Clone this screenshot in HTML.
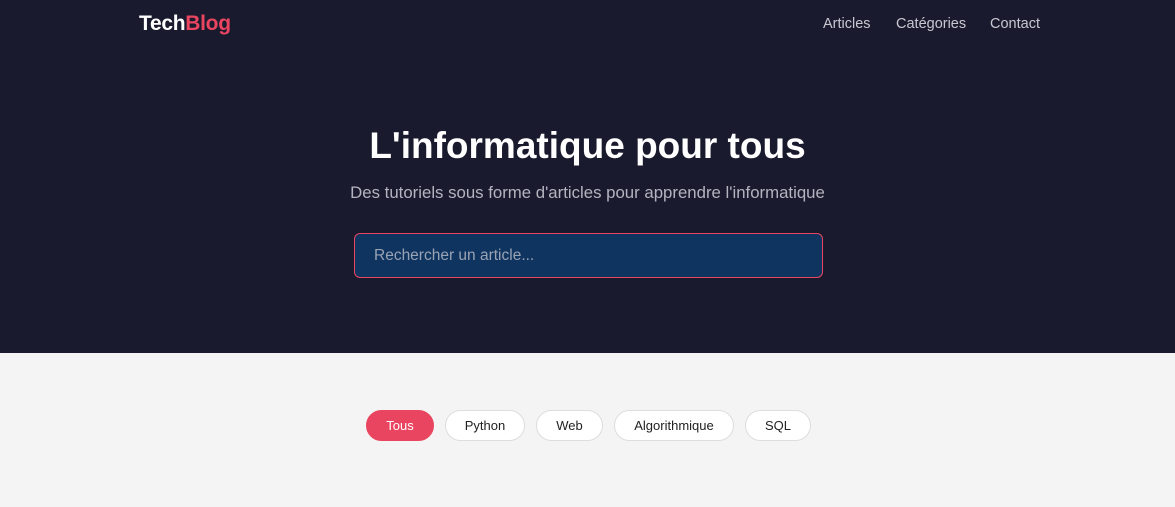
<!DOCTYPE html>
<html><head><meta charset="utf-8"><style>
*{margin:0;padding:0;box-sizing:border-box}
body{width:1175px;height:507px;overflow:hidden;background:#f4f4f4;font-family:"Liberation Sans",Arial,sans-serif}
.hero{background:#1a1a2e;height:353px;position:relative}
.logo{position:absolute;left:139px;top:12px;font-size:21px;font-weight:bold;color:#fff;letter-spacing:-0.3px}
.logo span{color:#e94560}
.nav{position:absolute;top:16px;font-size:14.5px;color:#c8c8d2}
h1{position:absolute;left:0;right:0;top:125px;text-align:center;color:#fff;font-size:37px;font-weight:bold}
.sub{position:absolute;left:0;right:0;top:183px;text-align:center;color:#b4b4c0;font-size:16.8px}
.search{position:absolute;left:354px;top:233px;width:469px;height:45px;background:#0f3460;border:1px solid #e94560;border-radius:6px;color:#9aa3b4;font-size:15.5px;padding:13px 0 0 19px}
.pill{position:absolute;top:410px;height:31px;border-radius:16px;background:#fff;border:1px solid #ddd;font-size:13px;color:#222;text-align:center;line-height:29px}
.pill.a{background:#e94560;border-color:#e94560;color:#fff}
</style></head><body>
<div class="hero">
<div class="logo">Tech<span>Blog</span></div>
<div class="nav" style="left:823px">Articles</div>
<div class="nav" style="left:896px">Catégories</div>
<div class="nav" style="left:990px">Contact</div>
<h1>L'informatique pour tous</h1>
<div class="sub">Des tutoriels sous forme d'articles pour apprendre l'informatique</div>
<div class="search">Rechercher un article...</div>
</div>
<div class="pill a" style="left:366px;width:68px">Tous</div>
<div class="pill" style="left:445px;width:80px">Python</div>
<div class="pill" style="left:536px;width:67px">Web</div>
<div class="pill" style="left:614px;width:120px">Algorithmique</div>
<div class="pill" style="left:745px;width:66px">SQL</div>
</body></html>
